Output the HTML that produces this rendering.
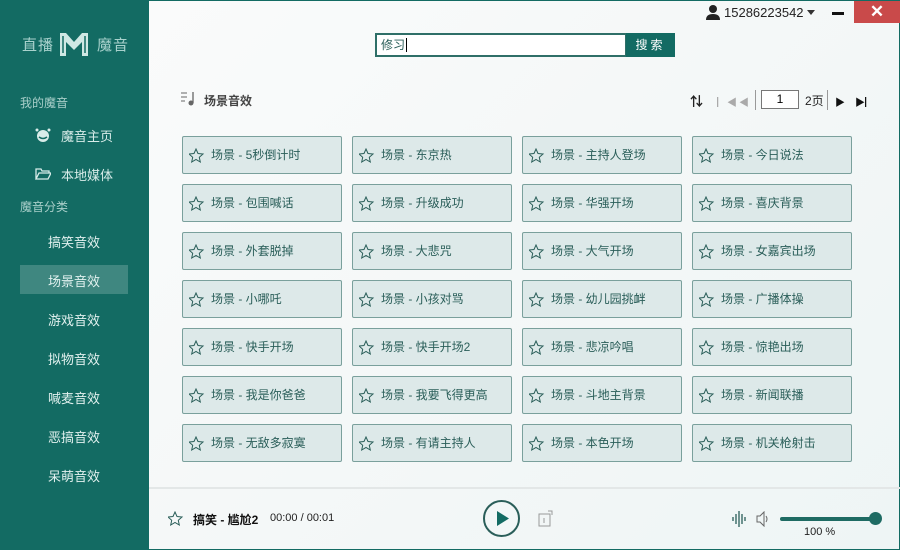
<!DOCTYPE html>
<html><head><meta charset="utf-8"><style>
*{margin:0;padding:0;box-sizing:border-box}
body{width:900px;height:550px;overflow:hidden;font-family:"Liberation Sans","Noto Sans CJK SC",sans-serif;background:#fff;position:relative}
.side{position:absolute;left:0;top:0;width:149px;height:550px;background:#136b63;color:#d8ece9}
.main{position:absolute;left:149px;top:0;width:751px;height:550px;background:linear-gradient(135deg,#fafbfb,#f3f7f7 60%,#eef5f5);border:1px solid #136b63;border-left:none}
.abs{position:absolute}
.card{position:absolute;width:160px;height:38px;background:#dde9e9;border:1px solid #7aa09c;border-radius:2px;font-size:12px;color:#2a5e59;line-height:36px;padding-left:28px}
.card svg{position:absolute;left:6px;top:11px}
.nav{position:absolute;left:48px;font-size:13px;color:#e2f1ef}
</style></head><body>
<div class="side">
  <div class="abs" style="left:22px;top:34px;font-size:15px;color:#a9d2cd;letter-spacing:1px">直播</div>
  <svg class="abs" style="left:59px;top:32px" width="30" height="25" viewBox="0 0 30 25"><path d="M1 1h6l8 9 8-9h6v23h-6V10l-8 8-8-8v14H1z" fill="#cfe8e4"/><path d="M4 4v17M26 4v17" stroke="#136b63" stroke-width="1.5"/></svg>
  <div class="abs" style="left:97px;top:34px;font-size:15px;color:#a9d2cd;letter-spacing:1px">魔音</div>
  <div class="abs" style="left:20px;top:94px;font-size:12px;color:#a9cfca">我的魔音</div>
  <svg class="abs" style="left:35px;top:127px" width="16" height="16" viewBox="0 0 16 16"><circle cx="8" cy="9" r="6" fill="#d8ece9"/><path d="M4 10q4 3 8 0" stroke="#136b63" stroke-width="1.5" fill="none"/><circle cx="2" cy="3" r="1.5" fill="#d8ece9"/><circle cx="14" cy="3" r="1.5" fill="#d8ece9"/></svg>
  <div class="abs" style="left:61px;top:126px;font-size:13px">魔音主页</div>
  <svg class="abs" style="left:35px;top:168px" width="16" height="12" viewBox="0 0 16 12"><path d="M1 1h5l1 2h7v2H4L1 11z M4 5h12l-3 6H1z" fill="none" stroke="#d8ece9" stroke-width="1.3"/></svg>
  <div class="abs" style="left:61px;top:165px;font-size:13px">本地媒体</div>
  <div class="abs" style="left:20px;top:198px;font-size:12px;color:#a9cfca">魔音分类</div>
  <div class="abs" style="left:20px;top:265px;width:108px;height:29px;background:#3f8780"></div>
  <div class="nav" style="top:232px">搞笑音效</div>
  <div class="nav" style="top:271px">场景音效</div>
  <div class="nav" style="top:310px">游戏音效</div>
  <div class="nav" style="top:349px">拟物音效</div>
  <div class="nav" style="top:388px">喊麦音效</div>
  <div class="nav" style="top:427px">恶搞音效</div>
  <div class="nav" style="top:466px">呆萌音效</div>
</div>
<div class="main">
  <svg class="abs" style="left:557px;top:4px" width="14" height="15" viewBox="0 0 14 15"><circle cx="7" cy="4" r="4" fill="#222"/><path d="M0 15q0-6 7-6t7 6z" fill="#222"/></svg>
  <div class="abs" style="left:575px;top:4px;font-size:13px;color:#222">15286223542</div>
  <div class="abs" style="left:658px;top:9px;border:4px solid transparent;border-top:5px solid #333"></div>
  <div class="abs" style="left:683px;top:11px;width:12px;height:3px;background:#111"></div>
  <div class="abs" style="left:705px;top:0;width:46px;height:22px;background:#c94a4a;color:#fff;font-size:17px;font-weight:bold;text-align:center;line-height:22px">✕</div>
  <div class="abs" style="left:226px;top:32px;width:252px;height:24px;border:2px solid #2f6f68;background:#fff;font-size:12px;color:#2a5e59;padding-left:4px;line-height:20px">修习<span style="border-left:1px solid #000;margin-left:1px"></span></div>
  <div class="abs" style="left:477px;top:32px;width:49px;height:24px;background:#136b63;color:#fff;font-size:12px;text-align:center;line-height:24px;letter-spacing:3px">搜索</div>
  <svg class="abs" style="left:32px;top:90px" width="15" height="16" viewBox="0 0 15 16"><path d="M0 2h6M0 6h6M0 10h4" stroke="#666" stroke-width="1"/><path d="M12 1v11" stroke="#666" stroke-width="1.3"/><circle cx="10" cy="12" r="2.5" fill="#666"/></svg>
  <div class="abs" style="left:55px;top:91px;font-size:12px;color:#444;font-weight:bold">场景音效</div>
  <div class="abs" style="left:541px;top:90px;font-size:13px;font-weight:bold;color:#222">⇅</div>
  <div class="abs" style="left:568px;top:93px;font-size:10px;color:#aaa">▏◀</div>
  <div class="abs" style="left:590px;top:93px;font-size:10px;color:#aaa">◀</div>
  <div class="abs" style="left:606px;top:89px;width:1px;height:20px;background:#999"></div>
  <div class="abs" style="left:612px;top:89px;width:38px;height:19px;border:1px solid #777;background:#fff;font-size:12px;text-align:center;line-height:17px">1</div>
  <div class="abs" style="left:656px;top:91px;font-size:12px;color:#222">2页</div>
  <div class="abs" style="left:678px;top:89px;width:1px;height:20px;background:#999"></div>
  <div class="abs" style="left:686px;top:93px;font-size:10px;color:#111">▶</div>
  <div class="abs" style="left:706px;top:93px;font-size:10px;color:#111">▶▏</div>

  <div id="grid"></div>
  <div class="abs" style="left:0;top:486px;width:751px;height:2px;background:#e3e7e7"></div>
  <svg class="abs" style="left:19px;top:510px" width="16" height="16" viewBox="0 0 16 16"><path d="M7 1l2 4.5 5 .5-3.7 3.3 1 4.7L7 11.5 2.7 14l1-4.7L0 6l5-.5z" fill="none" stroke="#2a5e59" stroke-width="1"/></svg>
  <div class="abs" style="left:44px;top:510px;font-size:12px;font-weight:bold;color:#111">搞笑 - 尴尬2</div>
  <div class="abs" style="left:121px;top:511px;font-size:11px;color:#222">00:00 / 00:01</div>
  <div class="abs" style="left:334px;top:499px;width:37px;height:37px;border:2px solid #2a5e59;border-radius:50%"></div>
  <svg class="abs" style="left:347px;top:509px" width="14" height="17" viewBox="0 0 14 17"><path d="M1 1l12 7.5L1 16z" fill="#136b63"/></svg>
  <svg class="abs" style="left:389px;top:509px" width="16" height="17" viewBox="0 0 16 17"><rect x="1" y="4" width="11" height="12" fill="none" stroke="#999"/><path d="M6 8v5M10 1h4v4" stroke="#999" fill="none"/></svg>
  <svg class="abs" style="left:583px;top:510px" width="14" height="16" viewBox="0 0 14 16"><path d="M1 6v4M4 3v10M7 0v16M10 3v10M13 6v4" stroke="#2a5e59" stroke-width="1.3"/></svg>
  <svg class="abs" style="left:607px;top:510px" width="14" height="16" viewBox="0 0 14 16"><path d="M1 5h3l4-4v14l-4-4H1z" fill="none" stroke="#666"/><path d="M10 5q2 3 0 6" stroke="#666" fill="none"/></svg>
  <div class="abs" style="left:631px;top:516px;width:95px;height:4px;background:#1e6b63;border-radius:2px"></div>
  <div class="abs" style="left:720px;top:511px;width:13px;height:13px;background:#1e6b63;border-radius:50%"></div>
  <div class="abs" style="left:655px;top:525px;font-size:11px;color:#222">100 %</div>
</div>
<script>
var names=[["5秒倒计时","东京热","主持人登场","今日说法"],["包围喊话","升级成功","华强开场","喜庆背景"],["外套脱掉","大悲咒","大气开场","女嘉宾出场"],["小哪吒","小孩对骂","幼儿园挑衅","广播体操"],["快手开场","快手开场2","悲凉吟唱","惊艳出场"],["我是你爸爸","我要飞得更高","斗地主背景","新闻联播"],["无敌多寂寞","有请主持人","本色开场","机关枪射击"]];
var h="";for(var r=0;r<7;r++)for(var c=0;c<4;c++){h+='<div class="card" style="left:'+(33+c*170)+'px;top:'+(135+r*48)+'px"><svg width="16" height="16" viewBox="0 0 16 16"><path d="M7 1l2 4.5 5 .5-3.7 3.3 1 4.7L7 11.5 2.7 14l1-4.7L0 6l5-.5z" fill="none" stroke="#2a5e59" stroke-width="1"/></svg>场景 - '+names[r][c]+'</div>';}
document.getElementById("grid").innerHTML=h;
</script>
</body></html>
